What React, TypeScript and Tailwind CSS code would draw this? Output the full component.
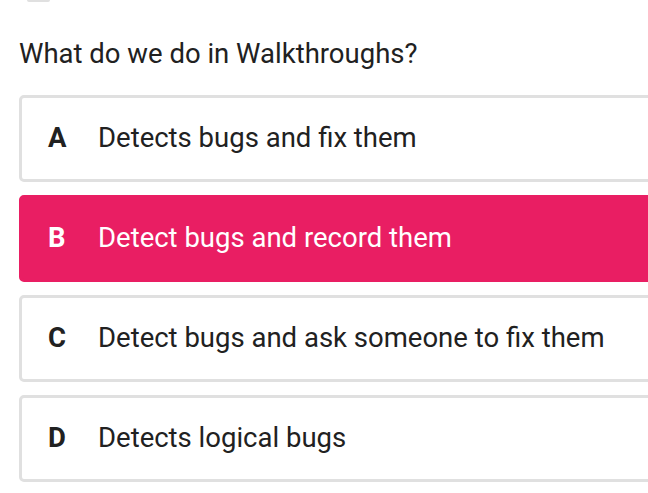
const options = [
  { key: "A", text: "Detects bugs and fix them" },
  { key: "B", text: "Detect bugs and record them", selected: true },
  { key: "C", text: "Detect bugs and ask someone to fix them" },
  { key: "D", text: "Detects logical bugs" },
];

export default function App() {
  return (
    <div
      className="h-[493px] w-[648px] overflow-hidden bg-white text-[#212121]"
      style={{ fontFamily: "Roboto, 'Liberation Sans', sans-serif" }}
    >
      <div className="ml-[27px] h-[2px] w-[23px] rounded-b bg-[#e0e0e0]" />
      <div className="w-[720px] pl-[19px]">
        <h2 className="mt-[34px] text-[27.5px] leading-[36px] font-normal">
          What do we do in Walkthroughs?
        </h2>
        <div className="mt-[23px] flex flex-col gap-[13px]">
          {options.map((o) => (
            <div
              key={o.key}
              className={
                o.selected
                  ? "flex h-[87px] items-center rounded-[5px] border-[3px] border-[#e91e63] bg-[#e91e63] pb-[2px] text-white"
                  : "flex h-[87px] items-center rounded-[5px] border-[3px] border-[#e0e0e0] bg-white pb-[2px]"
              }
            >
              <span className="w-[76px] pl-[26px] text-[27.5px] font-bold">
                {o.key}
              </span>
              <span className="text-[27.5px]">{o.text}</span>
            </div>
          ))}
        </div>
      </div>
    </div>
  );
}
